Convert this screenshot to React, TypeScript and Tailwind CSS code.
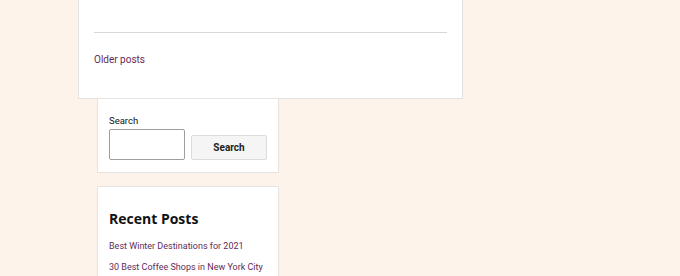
import React from "react";

const recentPosts = [
  "Best Winter Destinations for 2021",
  "30 Best Coffee Shops in New York City",
];

export default function App() {
  return (
    <div
      className="h-[276px] w-[680px] overflow-hidden bg-[#fdf3ea]"
      style={{ fontFamily: "Roboto, 'Liberation Sans', sans-serif" }}
    >
      <div className="ml-[78px] w-[385px] border border-t-0 border-[#e4e2e2] bg-white px-[15px] pt-[32px] pb-[31px]">
        <hr className="border-t border-[#d8d6d6]" />
        <div className="mt-[20px] text-[10px] leading-[14px]">
          <a href="#" className="text-[#642a57]">
            Older posts
          </a>
        </div>
      </div>

      <div className="ml-[97px] flex w-[182px] flex-col gap-[13px]">
        <div className="-mt-px border border-[#e6e3e3] bg-white px-[11px] pt-[15px] pb-[12px]">
          <label className="block text-[9.5px] leading-[13px] text-[#111]">Search</label>
          <div className="mt-[2px] flex items-end gap-[6px]">
            <input
              type="text"
              className="h-[31px] w-[76px] rounded-[2px] border border-[#9e9e9e] bg-white"
            />
            <button className="h-[25px] w-[76px] rounded-[2px] border border-[#dcdcdc] bg-[#f5f5f5] text-[10px] font-bold text-[#222]">
              Search
            </button>
          </div>
        </div>

        <div className="border border-[#e6e3e3] bg-white px-[11px] pt-[22px] pb-[20px]">
          <h2
            className="text-[14px] leading-[20px] font-bold text-[#111]"
            style={{ fontFamily: "'Open Sans', sans-serif" }}
          >
            Recent Posts
          </h2>
          <ul className="mt-[10px] flex flex-col gap-[7px]">
            {recentPosts.map((p) => (
              <li key={p} className="text-[9px] leading-[14px]">
                <a href="#" className="text-[#642a57]">
                  {p}
                </a>
              </li>
            ))}
          </ul>
        </div>
      </div>
    </div>
  );
}
